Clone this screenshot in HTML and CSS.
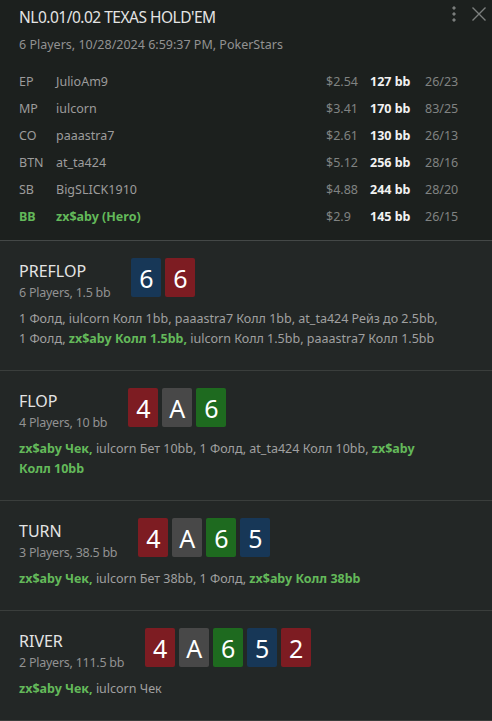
FILE: index.html
```html
<!DOCTYPE html>
<html lang="en">
<head>
  <meta charset="UTF-8" />
  <meta name="viewport" content="width=device-width, initial-scale=1.0"/>
  <title>Hand history</title>
  <link rel="stylesheet" href="styles.css">
</head>
<body>
  <div class="hand">
    <div class="hand-header">
      <div class="header-tools">
        <svg class="tool" width="8" height="18" viewBox="0 0 8 18"><circle cx="4" cy="3" r="1.2"/><circle cx="4" cy="9" r="1.2"/><circle cx="4" cy="15" r="1.2"/></svg>
        <svg class="tool" width="16" height="16" viewBox="0 0 16 16"><path d="M1.5 1.5 L14.5 14.5 M14.5 1.5 L1.5 14.5" stroke-width="1.4" fill="none"/></svg>
      </div>
      <h1 class="hand-title">NL0.01/0.02 TEXAS HOLD'EM</h1>
      <div class="hand-sub">6 Players, 10/28/2024 6:59:37 PM, PokerStars</div>

      <div class="players">
        <div class="player">
          <span>EP</span><span>JulioAm9</span><span class="money">$2.54</span><span class="bb">127 bb</span><span class="stats">26/23</span>
        </div>
        <div class="player">
          <span>MP</span><span>iulcorn</span><span class="money">$3.41</span><span class="bb">170 bb</span><span class="stats">83/25</span>
        </div>
        <div class="player">
          <span>CO</span><span>paaastra7</span><span class="money">$2.61</span><span class="bb">130 bb</span><span class="stats">26/13</span>
        </div>
        <div class="player">
          <span>BTN</span><span>at_ta424</span><span class="money">$5.12</span><span class="bb">256 bb</span><span class="stats">28/16</span>
        </div>
        <div class="player">
          <span>SB</span><span>BigSLICK1910</span><span class="money">$4.88</span><span class="bb">244 bb</span><span class="stats">28/20</span>
        </div>
        <div class="player hero">
          <span>BB</span><span>zx$aby (Hero)</span><span class="money">$2.9</span><span class="bb">145 bb</span><span class="stats">26/15</span>
        </div>
      </div>
    </div>

    <div class="street">
      <div class="street-top">
        <div class="street-info">
          <div class="street-name">PREFLOP</div>
          <div class="street-sub">6 Players, 1.5 bb</div>
        </div>
        <div class="cards">
          <span class="card blue">6</span><span class="card red">6</span>
        </div>
      </div>
      <div class="actions">1 Фолд, iulcorn Колл 1bb, paaastra7 Колл 1bb, at_ta424 Рейз до 2.5bb, 1 Фолд, <b class="me">zx$aby Колл 1.5bb,</b> iulcorn Колл 1.5bb, paaastra7 Колл 1.5bb</div>
    </div>

    <div class="street">
      <div class="street-top">
        <div class="street-info">
          <div class="street-name">FLOP</div>
          <div class="street-sub">4 Players, 10 bb</div>
        </div>
        <div class="cards">
          <span class="card red">4</span><span class="card gray">A</span><span class="card green">6</span>
        </div>
      </div>
      <div class="actions"><b class="me">zx$aby Чек,</b> iulcorn Бет 10bb, 1 Фолд, at_ta424 Колл 10bb, <b class="me">zx$aby Колл 10bb</b></div>
    </div>

    <div class="street">
      <div class="street-top">
        <div class="street-info">
          <div class="street-name">TURN</div>
          <div class="street-sub">3 Players, 38.5 bb</div>
        </div>
        <div class="cards">
          <span class="card red">4</span><span class="card gray">A</span><span class="card green">6</span><span class="card blue">5</span>
        </div>
      </div>
      <div class="actions"><b class="me">zx$aby Чек,</b> iulcorn Бет 38bb, 1 Фолд, <b class="me">zx$aby Колл 38bb</b></div>
    </div>

    <div class="street">
      <div class="street-top">
        <div class="street-info">
          <div class="street-name">RIVER</div>
          <div class="street-sub">2 Players, 111.5 bb</div>
        </div>
        <div class="cards">
          <span class="card red">4</span><span class="card gray">A</span><span class="card green">6</span><span class="card blue">5</span><span class="card red">2</span>
        </div>
      </div>
      <div class="actions"><b class="me">zx$aby Чек,</b> iulcorn Чек</div>
    </div>
  </div>
</body>
</html>
```
FILE: styles.css
```css
body {
  margin: 0;
  font-family: "Noto Sans", "Open Sans", sans-serif;
  background-color: #232726;
  color: #a3a3a3;
}
.hand {
  width: 492px;
  height: 721px;
  overflow: hidden;
}
.hand-header {
  position: relative;
  background: #1c201e;
  padding: 7px 19px 10px;
  border-bottom: 1px solid #444847;
}
.header-tools {
  position: absolute;
  top: 5px;
  right: 5px;
  display: flex;
  align-items: center;
  gap: 13px;
}
.tool {
  fill: #7c7f7e;
  stroke: #7c7f7e;
}
.hand-title {
  margin: 0;
  font-size: 15.5px;
  font-weight: normal;
  letter-spacing: -0.5px;
  line-height: 20px;
  color: #e4e4e4;
}
.hand-sub {
  margin-top: 9px;
  font-size: 12.5px;
  line-height: 18px;
  color: #929292;
}
.players {
  margin-top: 14px;
}
.player {
  display: grid;
  grid-template-columns: 37px 270px 44px 55px 1fr;
  height: 27px;
  align-items: center;
  font-size: 12.5px;
  color: #9c9c9c;
}
.player .money,
.player .stats {
  color: #808382;
}
.player .bb {
  color: #f2f2f2;
  font-weight: bold;
}
.player.hero span:nth-child(-n+2) {
  color: #63b95a;
  font-weight: bold;
}
.street {
  padding: 17px 19px 21px;
  border-bottom: 1px solid #3a3e3c;
}
.street-top {
  display: flex;
  align-items: flex-start;
  gap: 21px;
}
.street-info {
  margin-top: 3px;
}
.street-name {
  font-size: 16px;
  line-height: 20px;
  color: #e4e4e4;
}
.street-sub {
  margin-top: 3px;
  font-size: 12.5px;
  letter-spacing: -0.25px;
  line-height: 18px;
  color: #929292;
}
.cards {
  display: flex;
  gap: 4px;
}
.card {
  width: 30px;
  height: 39px;
  border-radius: 2px;
  display: flex;
  align-items: center;
  justify-content: center;
  color: #fff;
  font-size: 25px;
}
.card.red { background: #7d1c22; }
.card.blue { background: #173757; }
.card.gray { background: #484848; }
.card.green { background: #1e6a1f; }
.actions {
  max-width: 422px;
  margin-top: 7px;
  font-size: 12.5px;
  line-height: 20px;
  color: #a0a0a0;
}
.me {
  color: #63b95a;
}
```
